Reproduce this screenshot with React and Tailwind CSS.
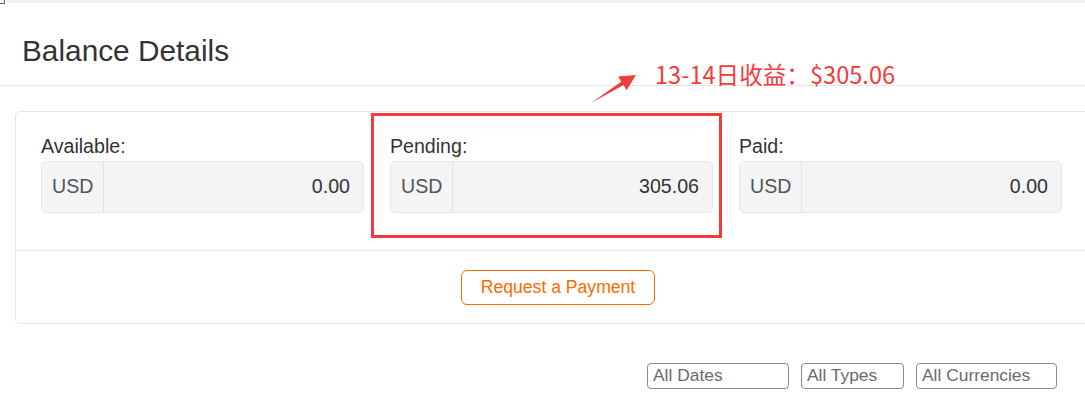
import React from "react";

function Amount({ label, value }) {
  return (
    <div>
      <div className="text-[19.6px] leading-[19px] mb-[5px] text-[#333]">{label}</div>
      <div className="flex h-[52px] rounded-[5px] border border-[#e6e7e9] bg-[#f3f4f6] overflow-hidden">
        <div className="w-[62px] shrink-0 border-r border-[#e2e3e5] bg-[#f4f5f6] flex items-center pl-[10px] text-[19.6px] text-[#555]">
          USD
        </div>
        <div className="flex-1 flex items-center justify-end pr-[13px] text-[19.6px] text-[#333]">
          {value}
        </div>
      </div>
    </div>
  );
}

function Filter({ text, w }) {
  return (
    <div className={`${w} h-[26px] rounded-[4px] border border-[#8a8a8a] pl-[5px] pt-[2px] overflow-hidden text-[17.4px] leading-[19px] text-[#6b6b6b]`}>
      {text}
    </div>
  );
}

export default function App() {
  return (
    <div className="relative w-[1085px] h-[402px] overflow-hidden bg-white font-['Liberation_Sans',Arial,sans-serif] text-[#333]">
      <div className="h-[3px] ml-[6px] bg-[#f1f2f4]" />
      <div className="absolute left-0 top-0 w-[5px] h-[4px] border-r border-b border-[#666]" />

      <div className="h-[83px] border-b border-[#e6e6e6] pl-[22px] pt-[33px]">
        <h1 className="text-[29.8px] leading-[29px] font-normal text-[#333]">Balance Details</h1>
      </div>

      <div className="mt-[25px] ml-[15px] w-[1086px] border border-[#e8e8e8] rounded-[5px]">
        <div className="grid grid-cols-[323px_323px_323px] gap-x-[26px] pl-[25px] pt-[25px] pb-[37px]">
          <Amount label="Available:" value="0.00" />
          <Amount label="Pending:" value="305.06" />
          <Amount label="Paid:" value="0.00" />
        </div>
        <div className="border-t border-[#e8e8e8] pt-[19px] pb-[18px] flex justify-center">
          <button className="w-[194px] h-[35px] rounded-[6px] border border-[#ff6a00] bg-white text-[#ff6a00] text-[17.6px] leading-none">
            Request a Payment
          </button>
        </div>
      </div>

      <div className="mt-[39px] flex justify-end gap-[12px] pr-[28px]">
        <Filter text="All Dates" w="w-[142px]" />
        <Filter text="All Types" w="w-[103px]" />
        <Filter text="All Currencies" w="w-[141px]" />
      </div>

      {/* annotation overlay */}
      <div className="absolute left-[371px] top-[113px] w-[351px] h-[125px] border-[3px] border-[#f23b3b]" />
      <svg className="absolute left-[585px] top-[70px]" width="55" height="38" viewBox="0 0 55 38">
        <polygon points="6,33 36.3,11.7 33.2,6.6 51,5 41.6,20.2 38.5,15.1" fill="#f23b3b" />
      </svg>
      <div className="absolute left-[655px] top-[62px] text-[23.6px] leading-[24px] text-[#f23b3b] whitespace-nowrap font-['Noto_Sans_CJK_SC','Noto_Sans',sans-serif]">
        13-14日收益：$305.06
      </div>
    </div>
  );
}
